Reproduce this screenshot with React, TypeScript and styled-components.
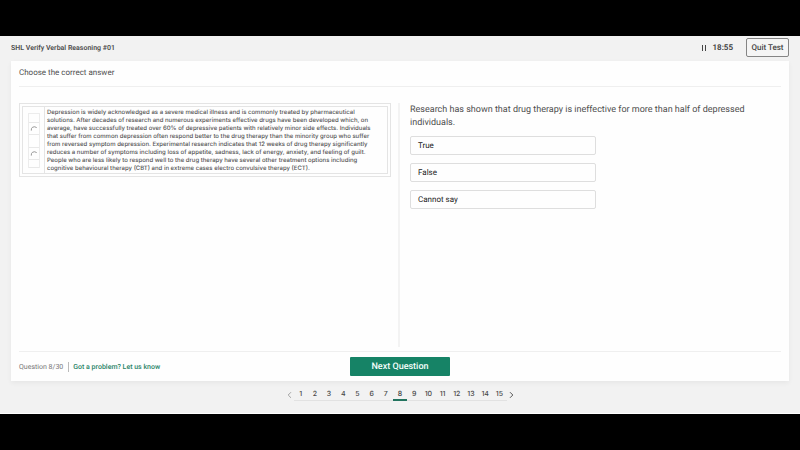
import React, { useState } from "react";
import styled, { createGlobalStyle } from "styled-components";

const GlobalStyle = createGlobalStyle`
  *, *::before, *::after { box-sizing: border-box; }
  body {
    margin: 0;
    background: #000;
    color: #4e4e4e;
    font-family: Roboto, Inter, "Liberation Sans", sans-serif;
    text-rendering: geometricPrecision;
  }
  button { font-family: inherit; text-rendering: inherit; cursor: pointer; }
  h1, h2, p { margin: 0; font-weight: 400; }
`;

const Frame = styled.div`
  display: flex;
  min-height: 100vh;
  padding: 36px 0;
`;

const Page = styled.div`
  flex: 1;
  display: flex;
  flex-direction: column;
  padding: 0 11px;
  background: #f2f2f2;
  border-bottom: 1px solid #fff;
`;

const Header = styled.header`
  display: flex;
  align-items: center;
  height: 25px;
  padding-bottom: 2px;
`;

const TestName = styled.h1`
  flex: 1;
  font-size: 7px;
  line-height: 12px;
  font-weight: 600;
`;

const PauseButton = styled.button`
  display: flex;
  padding: 2px;
  border: 0;
  background: none;
  color: #444;
`;

const Timer = styled.time`
  margin: 0 13px 0 4px;
  font-size: 8px;
  line-height: 12px;
  font-weight: 600;
  color: #3c3c3c;
`;

const QuitButton = styled.button`
  height: 19px;
  width: 43px;
  padding: 0;
  border: 1px solid #858585;
  border-radius: 2px;
  background: #f5f5f5;
  color: #444;
  font-size: 8px;
  font-weight: 500;
  white-space: nowrap;
`;

const Card = styled.main`
  flex: 1;
  display: flex;
  flex-direction: column;
  padding: 0 8px;
  background: #fefefe;
  box-shadow: 0 2px 5px rgba(0, 0, 0, 0.05);
`;

const Instruction = styled.h2`
  padding: 6px 0 7px;
  border-bottom: 1px solid #efefef;
  font-size: 8px;
  line-height: 12px;
`;

const Columns = styled.div`
  flex: 1;
  display: grid;
  grid-template-columns: 1fr 1fr;
  padding: 16px 0 4px;
`;

const PassagePane = styled.section`
  padding-right: 7px;
  border-right: 2px solid #f3f3f3;
`;

const PassageFrame = styled.div`
  padding: 2px;
  border: 1px solid #e4e4e4;
`;

const PassageBody = styled.div`
  display: flex;
  border: 1px solid #e4e4e4;
`;

const MarkerCell = styled.div`
  padding: 6px 4px 5px 5px;
  border-right: 1px solid #e4e4e4;
`;

const MarkerStack = styled.div`
  display: grid;
  grid-template-rows: 9px 12px 13px 12px 8px;
  width: 12px;
  border: solid #ececec;
  border-width: 1px 1px 0;
`;

const Marker = styled.div`
  display: flex;
  align-items: center;
  justify-content: center;
  border-bottom: 1px solid #e8e8e8;
`;

const PassageText = styled.p`
  flex: 1;
  padding: 2px 15px 0 2px;
  font-family: Inter, sans-serif;
  font-size: 6px;
  line-height: 8px;
  font-weight: 500;
  color: #555;
`;

const QuestionPane = styled.section`
  padding: 1px 0 0 10px;
`;

const QuestionText = styled.p`
  max-width: 350px;
  font-size: 9px;
  line-height: 13px;
`;

const Options = styled.div`
  display: grid;
  gap: 8px;
  max-width: 186px;
  margin-top: 6px;
`;

const Option = styled.button`
  height: 19px;
  padding: 0 7px;
  border: 1px solid #dedede;
  border-radius: 2px;
  background: #fefefe;
  color: #222;
  font-size: 8px;
  text-align: left;
  &[aria-pressed="true"] { border-color: #19856a; }
`;

const Footer = styled.footer`
  display: grid;
  grid-template-columns: 1fr 100px 1fr;
  align-items: center;
  height: 30px;
  border-top: 1px solid #efefef;
`;

const Progress = styled.div`
  display: flex;
  align-items: center;
  font-size: 7px;
  line-height: 10px;
  color: #777;
`;

const HelpLink = styled.a`
  margin-left: 5px;
  padding-left: 4px;
  border-left: 1px solid #bbb;
  color: #298467;
  font-size: 7px;
  font-weight: 500;
  text-decoration: none;
`;

const NextButton = styled.button`
  height: 19px;
  padding: 0;
  border: 0;
  border-radius: 1px;
  background: #168366;
  color: #f4fffb;
  font-size: 9px;
  font-weight: 500;
`;

const Pagination = styled.nav`
  display: flex;
  align-items: center;
  justify-content: center;
  height: 32px;
  padding-bottom: 5px;
`;

const PageList = styled.div`
  display: grid;
  grid-template-columns: repeat(15, 1fr);
  width: 213px;
  height: 13px;
  border-bottom: 1px solid #e2e2e2;
`;

const PageButton = styled.button<{ $current: boolean }>`
  height: 13px;
  padding: 0;
  border: 0;
  border-bottom: ${({ $current }) => ($current ? "2px solid #23745f" : "2px solid transparent")};
  background: none;
  color: #484848;
  font-family: Inter, sans-serif;
  font-size: 7px;
  line-height: 11px;
  font-weight: 500;
`;

const ArrowButton = styled.button<{ $muted?: boolean }>`
  display: flex;
  padding: 0 2px;
  border: 0;
  background: none;
  color: ${({ $muted }) => ($muted ? "#999" : "#444")};
`;

const Arc = () => (
  <svg width="8" height="8" viewBox="0 0 8 8" fill="none" aria-hidden="true">
    <path d="M1.3 5.6Q1 3.2 2.6 2.2Q4.6 1.1 6.7 2.6" stroke="#8c8c8c" strokeWidth="0.9" />
  </svg>
);

const PauseIcon = () => (
  <svg width="6" height="8" viewBox="0 0 6 8" aria-hidden="true">
    <path d="M1.5 1v6M4.5 1v6" stroke="currentColor" strokeWidth="1" />
  </svg>
);

const Chevron = ({ direction }: { direction: "left" | "right" }) => (
  <svg width="5" height="8" viewBox="0 0 5 8" fill="none" aria-hidden="true">
    <path
      d={direction === "left" ? "M4 1.2 1.2 4 4 6.8" : "M1 1.2 3.8 4 1 6.8"}
      stroke="currentColor"
      strokeWidth="0.9"
    />
  </svg>
);

const passage =
  "Depression is widely acknowledged as a severe medical illness and is commonly treated by pharmaceutical solutions. After decades of research and numerous experiments effective drugs have been developed which, on average, have successfully treated over 60% of depressive patients with relatively minor side effects. Individuals that suffer from common depression often respond better to the drug therapy than the minority group who suffer from reversed symptom depression. Experimental research indicates that 12 weeks of drug therapy significantly reduces a number of symptoms including loss of appetite, sadness, lack of energy, anxiety, and feeling of guilt. People who are less likely to respond well to the drug therapy have several other treatment options including cognitive behavioural therapy (CBT) and in extreme cases electro convulsive therapy (ECT).";

const answers = ["True", "False", "Cannot say"];
const pages = Array.from({ length: 15 }, (_, i) => i + 1);

export default function App() {
  const [answer, setAnswer] = useState<string | null>(null);
  const [page, setPage] = useState(8);

  return (
    <>
      <GlobalStyle />
      <Frame>
        <Page>
          <Header>
            <TestName>SHL Verify Verbal Reasoning #01</TestName>
            <PauseButton aria-label="Pause"><PauseIcon /></PauseButton>
            <Timer>18:55</Timer>
            <QuitButton>Quit Test</QuitButton>
          </Header>
          <Card>
            <Instruction>Choose the correct answer</Instruction>
            <Columns>
              <PassagePane>
                <PassageFrame>
                  <PassageBody>
                    <MarkerCell>
                      <MarkerStack>
                        <Marker />
                        <Marker><Arc /></Marker>
                        <Marker />
                        <Marker><Arc /></Marker>
                        <Marker />
                      </MarkerStack>
                    </MarkerCell>
                    <PassageText>{passage}</PassageText>
                  </PassageBody>
                </PassageFrame>
              </PassagePane>
              <QuestionPane>
                <QuestionText>
                  Research has shown that drug therapy is ineffective for more than half of depressed individuals.
                </QuestionText>
                <Options>
                  {answers.map((label) => (
                    <Option key={label} aria-pressed={answer === label} onClick={() => setAnswer(label)}>
                      {label}
                    </Option>
                  ))}
                </Options>
              </QuestionPane>
            </Columns>
            <Footer>
              <Progress>
                Question {page}/30
                <HelpLink href="#help">Got a problem? Let us know</HelpLink>
              </Progress>
              <NextButton onClick={() => setPage(Math.min(15, page + 1))}>Next Question</NextButton>
            </Footer>
          </Card>
          <Pagination aria-label="Questions">
            <ArrowButton $muted aria-label="Previous" onClick={() => setPage(Math.max(1, page - 1))}>
              <Chevron direction="left" />
            </ArrowButton>
            <PageList>
              {pages.map((n) => (
                <PageButton
                  key={n}
                  $current={n === page}
                  aria-current={n === page ? "page" : undefined}
                  onClick={() => setPage(n)}
                >
                  {n}
                </PageButton>
              ))}
            </PageList>
            <ArrowButton aria-label="Next" onClick={() => setPage(Math.min(15, page + 1))}>
              <Chevron direction="right" />
            </ArrowButton>
          </Pagination>
        </Page>
      </Frame>
    </>
  );
}
